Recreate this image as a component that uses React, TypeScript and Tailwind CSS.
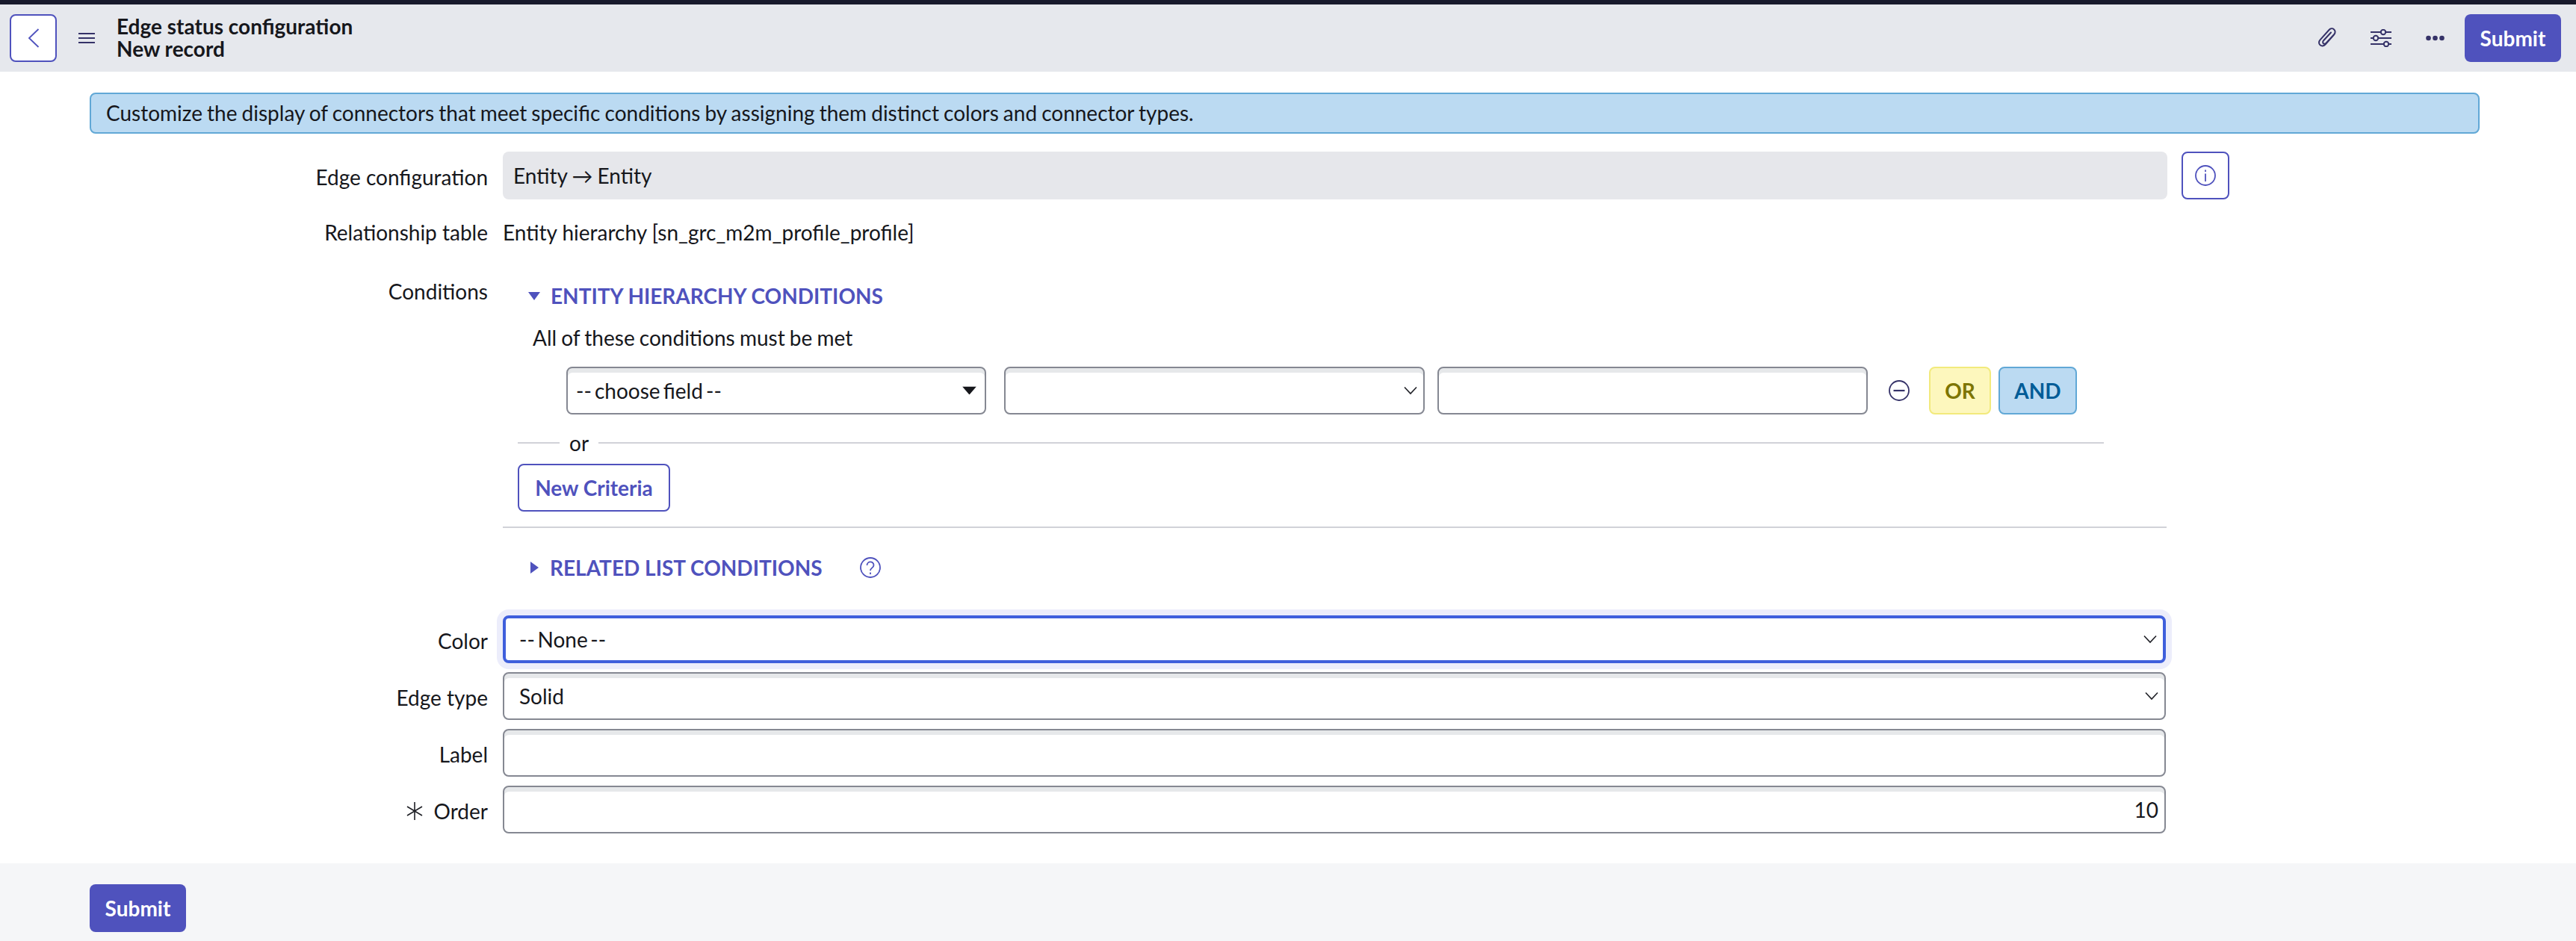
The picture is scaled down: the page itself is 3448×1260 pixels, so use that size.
const lato = "font-['Lato',sans-serif]";

function Chevron() {
  return (
    <svg viewBox="0 0 18 12" className="absolute right-[8px] top-1/2 h-[12px] w-[18px] -translate-y-1/2" fill="none" stroke="#1f2026" strokeWidth="1.6">
      <path d="M1 1.5 9 10l8-8.5" />
    </svg>
  );
}

function Field({ children, focus, className }: { children?: React.ReactNode; focus?: boolean; className?: string }) {
  return (
    <div
      className={
        focus
          ? "relative flex h-[64px] items-center rounded-[8px] border-[4px] border-[#3f5fdc] bg-white px-[18px] shadow-[0_0_0_8px_#ecedfb] " + (className ?? "")
          : "relative flex h-[64px] items-center rounded-[8px] border-2 border-[#858892] bg-white px-[20px] shadow-[inset_0_6px_0_#e6e8ea] " + (className ?? "")
      }
    >
      {children}
    </div>
  );
}

function Row({ label, required, className, labelClass, children }: { label: string; required?: boolean; className?: string; labelClass?: string; children: React.ReactNode }) {
  return (
    <div className={"flex items-center " + (className ?? "")}>
      <div className={"flex w-[653px] shrink-0 items-center justify-end gap-[14px] " + (labelClass ?? "translate-y-[2px]")}>
        {required && (
          <svg viewBox="0 0 24 24" className="h-[24px] w-[24px]" fill="none" stroke="#1f2026" strokeWidth="1.6">
            <path d="M12 0v24M2 6l20 12M22 6 2 18" />
          </svg>
        )}
        <span>{label}</span>
      </div>
      <div className="ml-[20px] min-w-0">{children}</div>
    </div>
  );
}

function SubmitButton() {
  return (
    <button className="h-[64px] w-[129px] rounded-[8px] bg-[#4f52bd] text-[28px] font-bold text-white">Submit</button>
  );
}

export default function App() {
  return (
    <div className={lato + " min-h-[1260px] bg-white text-[28px] leading-[30px] text-[#16171c]"}>
      <div className="h-[6px] bg-[#181a2c]" />
      <header className="flex h-[90px] items-center bg-[#e6e8ed] pl-[13px] pr-[20px]">
        <button className="flex h-[64px] w-[63px] items-center justify-center rounded-[8px] border-2 border-[#4f52bd] bg-white">
          <svg viewBox="0 0 16 26" className="h-[26px] w-[16px]" fill="none" stroke="#4f52bd" strokeWidth="1.8">
            <path d="M14.5 1 2 13l12.5 12" />
          </svg>
        </button>
        <svg viewBox="0 0 22 14" className="ml-[29px] h-[14px] w-[22px]" fill="none" stroke="#353268" strokeWidth="2">
          <path d="M0 1h22M0 7h22M0 13h22" />
        </svg>
        <div className="ml-[29px] pb-[3px] font-bold">
          <div>Edge status configuration</div>
          <div>New record</div>
        </div>
        <div className="ml-auto flex items-center">
          <svg viewBox="0 0 26 28" className="h-[28px] w-[26px]" fill="none" stroke="#353268" strokeWidth="2" strokeLinecap="round" strokeLinejoin="round">
            <path d="M22 9.5 10.500 22.500c-2 2.300-5 2.600-7 .8s-2-4.800 0-7L15.500 3c1.800-2 4.700-2.300 6.600-.6s2 4.600.2 6.600L11.500 20.800c-1 1.100-2.600 1.300-3.600.4s-1-2.600 0-3.700L18 6.500" />
          </svg>
          <svg viewBox="0 0 28 24" className="ml-[45px] h-[24px] w-[28px]" fill="none" stroke="#353268" strokeWidth="2">
            <path d="M0 4h13M21 4h7M0 12h3M11 12h17M0 20h17M25 20h3" />
            <circle cx="17" cy="4" r="3.2" />
            <circle cx="7" cy="12" r="3.2" />
            <circle cx="21" cy="20" r="3.2" />
          </svg>
          <svg viewBox="0 0 25 8" className="ml-[46px] h-[8px] w-[25px]" fill="#353268">
            <circle cx="3.5" cy="4" r="3.3" />
            <circle cx="12.5" cy="4" r="3.3" />
            <circle cx="21.5" cy="4" r="3.3" />
          </svg>
          <div className="ml-[27px]">
            <SubmitButton />
          </div>
        </div>
      </header>

      <main className="pt-[28px]">
        <div className="ml-[120px] mr-[129px] flex h-[55px] items-center rounded-[8px] border-2 border-[#61a8d6] bg-[#bbdaf2] pb-[2px] pl-[20px] [word-spacing:-1.1px]">
          Customize the display of connectors that meet specific conditions by assigning them distinct colors and connector types.
        </div>

        <Row label="Edge configuration" className="mt-[24px]">
          <div className="flex items-center gap-[19px]">
            <div className="flex h-[64px] w-[2228px] items-center rounded-[8px] bg-[#e6e7eb] px-[14px] [word-spacing:-1px]">Entity → Entity</div>
            <button className="flex h-[64px] w-[64px] items-center justify-center rounded-[8px] border-2 border-[#4f52bd]">
              <svg viewBox="0 0 28 28" className="h-[28px] w-[28px]" fill="none" stroke="#4f52bd" strokeWidth="1.8">
                <circle cx="14" cy="14" r="13" />
                <path d="M14 11.500V22M14 6.500v2.500" />
              </svg>
            </button>
          </div>
        </Row>

        <Row label="Relationship table" className="mt-[29px]" labelClass="translate-y-0">
          Entity hierarchy [sn_grc_m2m_profile_profile]
        </Row>

        <div className="mt-[49px] flex items-start">
          <div className="w-[653px] shrink-0 text-right">Conditions</div>
          <div className="ml-[20px] w-[2227px] pt-[6px]">
            <div className="flex h-[30px] items-center pl-[34px]">
              <svg viewBox="0 0 16 11" className="h-[11px] w-[16px]" fill="#4f52bd">
                <path d="M0 0h16L8 11z" />
              </svg>
              <span className="ml-[14px] font-bold uppercase text-[#4f52bd]">Entity hierarchy conditions</span>
            </div>
            <div className="mt-[26px] pl-[40px] [word-spacing:-1px]">All of these conditions must be met</div>

            <div className="mt-[24px] flex items-center pl-[85px]">
              <Field className="w-[562px] !px-[11px]">
                <span className="[word-spacing:-3px]">-- choose field --</span>
                <svg viewBox="0 0 19 11" className="absolute right-[11px] top-1/2 h-[11px] w-[19px] -translate-y-1/2" fill="#16171c">
                  <path d="M0 0h19L9.500 11z" />
                </svg>
              </Field>
              <Field className="ml-[24px] w-[563px]">
                <Chevron />
              </Field>
              <Field className="ml-[17px] w-[576px]" />
              <svg viewBox="0 0 28 28" className="ml-[28px] h-[28px] w-[28px]" fill="none" stroke="#353268" strokeWidth="1.8">
                <circle cx="14" cy="14" r="13" />
                <path d="M6.500 14h15" strokeWidth="2.200" />
              </svg>
              <button className="ml-[26px] h-[64px] w-[83px] rounded-[8px] border-2 border-[#f2ea7c] bg-[#fdf7bd] font-bold text-[#7d7500]">OR</button>
              <button className="ml-[10px] h-[64px] w-[105px] rounded-[8px] border-2 border-[#61a8d6] bg-[#bbdaf2] font-bold text-[#005c97]">AND</button>
            </div>

            <div className="mt-[23px] flex h-[30px] w-[2143px] items-center pl-[20px]">
              <div className="h-[2px] w-[56px] bg-[#d1d2d8]" />
              <span className="mx-[13px]">or</span>
              <div className="h-[2px] flex-1 bg-[#d1d2d8]" />
            </div>

            <button className="ml-[20px] mt-[13px] h-[64px] w-[204px] rounded-[8px] border-2 border-[#4f52bd] font-bold text-[#4f52bd]">New Criteria</button>

            <div className="mt-[20px] h-[2px] bg-[#d1d2d8]" />

            <div className="mt-[38px] flex h-[30px] items-center pl-[37px]">
              <svg viewBox="0 0 11 16" className="h-[16px] w-[11px]" fill="#4f52bd">
                <path d="M0 0v16l11-8z" />
              </svg>
              <span className="ml-[15px] font-bold uppercase text-[#4f52bd]">Related list conditions</span>
              <svg viewBox="0 0 28 28" className="ml-[50px] h-[28px] w-[28px]" fill="none" stroke="#4f52bd" strokeWidth="1.8">
                <circle cx="14" cy="14" r="13" />
                <path d="M9.500 11c0-6 9-6 9-.3 0 3.800-4.500 3.600-4.500 7.300M14 20.500v2.500" />
              </svg>
            </div>
          </div>
        </div>

        <div className="mt-[49px] flex flex-col gap-[12px]">
          <Row label="Color">
            <Field focus className="w-[2226px]">
              <span className="[word-spacing:-3.500px]">-- None --</span>
              <Chevron />
            </Field>
          </Row>
          <Row label="Edge type">
            <Field className="w-[2226px]">
              Solid
              <Chevron />
            </Field>
          </Row>
          <Row label="Label">
            <Field className="w-[2226px]" />
          </Row>
          <Row label="Order" required>
            <Field className="w-[2226px] justify-end !px-[8px]">10</Field>
          </Row>
        </div>
      </main>

      <footer className="mt-[40px] h-[104px] bg-[#f5f6f8] pl-[120px] pt-[28px]">
        <SubmitButton />
      </footer>
    </div>
  );
}
